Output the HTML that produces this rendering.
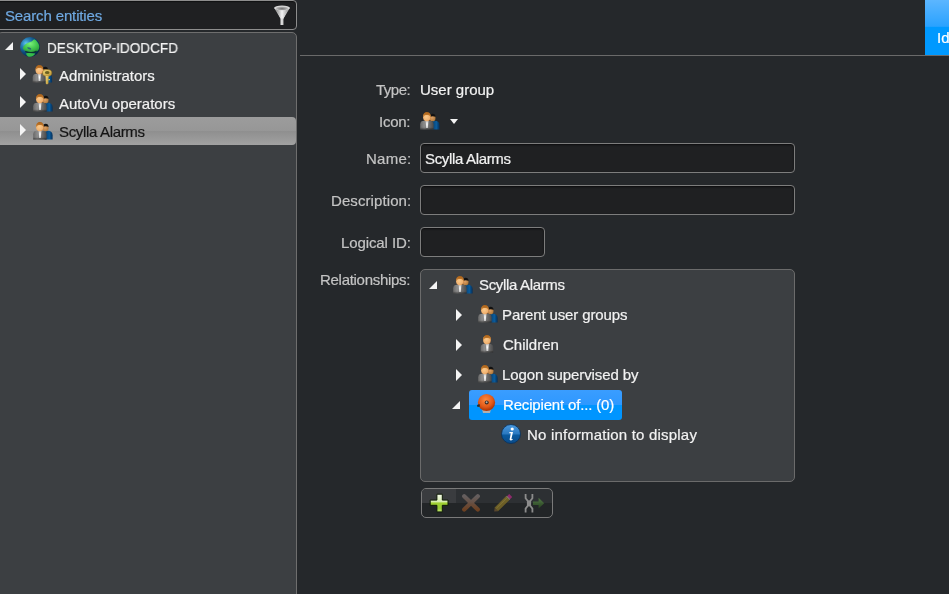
<!DOCTYPE html>
<html><head><meta charset="utf-8">
<style>
*{box-sizing:border-box;margin:0;padding:0}
html,body{width:949px;height:594px;overflow:hidden;background:#25282b;font-family:"Liberation Sans",sans-serif;}
.abs{position:absolute}
.t{position:absolute;white-space:nowrap;line-height:1;font-size:15px;will-change:transform;-webkit-text-stroke:0.2px currentColor}
#search{left:-6px;top:0;width:303px;height:30px;border:1px solid #8d8d8d;border-radius:4px;background:#1f2022;box-shadow:inset 0 1px 1px #101112}
#panel{left:-3px;top:32px;width:300px;height:600px;border:1px solid #6e6e6e;border-radius:5px;background:#3c3f42}
#sel{left:0;top:117px;width:296px;height:28px;border-radius:0 4px 4px 0;background:linear-gradient(#9c9c9c,#979797 48%,#8f8f8f 52%,#a2a2a2)}
#hline{left:300px;top:55px;width:649px;height:1px;background:#6a6a6a}
#tab{left:925px;top:0;width:24px;height:55px;background:linear-gradient(#5cb6ff,#2aa2ff 48%,#0099ff 49%,#0099ff)}
.lab{color:#c4c4c4}
.val{color:#f2f2f2}
.tb{position:absolute;border:1px solid #7d7d7d;border-radius:4px;background:#1f2022;box-shadow:inset 0 1px 2px #0c0c0d}
#rel{left:420px;top:269px;width:375px;height:213px;border:1px solid #6b6b6b;border-radius:5px;background:#3c3f42}
#sel2{left:469px;top:390px;width:153px;height:30px;border-radius:3px;background:linear-gradient(#3a9dff,#2e98ff 50%,#0095ff 51%,#0095ff)}
#toolbar{left:421px;top:488px;width:132px;height:30px;border:1px solid #7a7a7a;border-radius:5px;background:linear-gradient(#2d3033 50%,#222527 50%);overflow:hidden}
.tri-r{position:absolute;width:0;height:0;border-top:6px solid transparent;border-bottom:6px solid transparent;border-left:6px solid #f4f4f4}
.tri-d{position:absolute;width:0;height:0;border-left:8px solid transparent;border-bottom:8px solid #f4f4f4}
svg.ic{position:absolute;overflow:visible}
</style></head><body>

<svg width="0" height="0" style="position:absolute">
<defs>
<radialGradient id="face" cx="0.42" cy="0.45" r="0.6"><stop offset="0" stop-color="#fcca8a"/><stop offset="0.8" stop-color="#eeb070"/><stop offset="1" stop-color="#d08a48"/></radialGradient>
<radialGradient id="face2" cx="0.42" cy="0.45" r="0.6"><stop offset="0" stop-color="#dca068"/><stop offset="1" stop-color="#b07838"/></radialGradient>
<linearGradient id="suit" x1="0" x2="1"><stop offset="0" stop-color="#686868"/><stop offset="0.3" stop-color="#8c8c8c"/><stop offset="0.7" stop-color="#6a6a6a"/><stop offset="1" stop-color="#4a4a4a"/></linearGradient>
<linearGradient id="suitv" x1="0" y1="0" x2="0" y2="1"><stop offset="0.75" stop-color="#000" stop-opacity="0"/><stop offset="1" stop-color="#000" stop-opacity="0.45"/></linearGradient>
<linearGradient id="blue" x1="0" x2="1"><stop offset="0" stop-color="#083a68"/><stop offset="0.6" stop-color="#0a5c9c"/><stop offset="1" stop-color="#052e58"/></linearGradient>
<linearGradient id="hair" x1="0" y1="0" x2="0" y2="1"><stop offset="0" stop-color="#a86018"/><stop offset="1" stop-color="#d08838"/></linearGradient>
<radialGradient id="shirt" cx="0.5" cy="0.5" r="0.5"><stop offset="0" stop-color="#ffffff"/><stop offset="1" stop-color="#c8c8c8"/></radialGradient>
<symbol id="grp" viewBox="0 0 20 18" overflow="visible">
<path d="M11.6 17.4 L11.6 11 C11.6 9.4 13 8.8 15 8.8 C17.8 8.8 19.6 10.4 19.6 13.2 L19.6 17.4Z" fill="url(#blue)"/>
<ellipse cx="12.5" cy="5.9" rx="3" ry="3.4" fill="url(#face2)"/>
<path d="M9.6 4.8 C9.8 2.5 11.2 1.7 12.7 1.7 C14.4 1.7 15.5 2.7 15.6 4.9 C14.3 4 11.5 3.9 9.6 4.8Z" fill="#111"/>
<path d="M0.2 17.4 L0.2 12.2 C0.2 9.9 1.8 8.8 4 8.8 L9.8 8.8 C12 8.8 13.6 9.9 13.6 12.2 L13.6 17.4Z" fill="url(#suit)"/>
<path d="M0.2 17.4 L0.2 12.2 C0.2 9.9 1.8 8.8 4 8.8 L9.8 8.8 C12 8.8 13.6 9.9 13.6 12.2 L13.6 17.4Z" fill="url(#suitv)"/>
<path d="M5.5 8.8 L8.5 8.8 L7.9 16 L6.1 16Z" fill="url(#shirt)"/>
<ellipse cx="6.9" cy="5.2" rx="3.8" ry="4" fill="url(#face)"/>
<path d="M3.0 5.4 C2.8 1.8 4.8 0.1 6.9 0.1 C9.3 0.1 11 1.8 10.8 5.2 C10.1 3.7 8.6 3.1 6.9 3.1 C5.3 3.1 3.7 3.7 3.0 5.4Z" fill="url(#hair)"/>
</symbol>
<symbol id="one" viewBox="0 0 20 18" overflow="visible">
<path d="M2.7 17.4 L2.7 12.4 C2.7 10 4.3 8.8 6.7 8.8 L11.2 8.8 C13.6 8.8 15.2 10 15.2 12.4 L15.2 17.4Z" fill="url(#suit)"/>
<path d="M2.7 17.4 L2.7 12.4 C2.7 10 4.3 8.8 6.7 8.8 L11.2 8.8 C13.6 8.8 15.2 10 15.2 12.4 L15.2 17.4Z" fill="url(#suitv)"/>
<path d="M7.7 8.8 L11 8.8 L10.3 16 L8.4 16Z" fill="url(#shirt)"/>
<ellipse cx="9" cy="5" rx="3.9" ry="4.2" fill="url(#face)"/>
<path d="M5.1 5.1 C4.9 1.5 6.9 0 9 0 C11.4 0 13.1 1.5 12.9 4.9 C12.3 3.4 10.8 2.9 9 2.9 C7.3 2.9 5.8 3.5 5.1 5.1Z" fill="url(#hair)"/>
</symbol>
</defs>
</svg>
<div id="search" class="abs"></div>
<div class="t " style="left:5px;top:8px;letter-spacing:-0.14px;color:#6fa9e2">Search entities</div>
<svg class="ic" style="left:273px;top:4px" width="18" height="22" viewBox="0 0 18 22">
<defs><linearGradient id="fun" x1="0" x2="1"><stop offset="0" stop-color="#8a8a8a"/><stop offset="0.5" stop-color="#f4f4f4"/><stop offset="1" stop-color="#9a9a9a"/></linearGradient>
<radialGradient id="funin" cx="0.5" cy="0.6" r="0.6"><stop offset="0" stop-color="#707070"/><stop offset="1" stop-color="#c8c8c8"/></radialGradient></defs>
<path d="M1.2 4 C1.2 2 16.8 2 16.8 4 L10.2 15 L7.8 15Z" fill="url(#fun)"/>
<ellipse cx="9" cy="4" rx="7.8" ry="2.6" fill="#d8d8d8"/>
<ellipse cx="9" cy="4.3" rx="6" ry="1.9" fill="url(#funin)"/>
<path d="M3 5.2 C5 7 13 7 15 5.2 L10.2 15 L7.8 15Z" fill="url(#fun)"/>
<rect x="7.2" y="14.5" width="3.4" height="6.5" fill="url(#fun)"/>
</svg>
<div id="panel" class="abs"></div>
<div id="sel" class="abs"></div>
<div class="tri-d" style="left:5px;top:42px"></div>
<svg class="ic" style="left:20px;top:37px" width="20" height="20" viewBox="0 0 20 20">
<defs><radialGradient id="gl" cx="0.3" cy="0.32" r="0.72"><stop offset="0" stop-color="#60c8f0"/><stop offset="0.3" stop-color="#2a80b8"/><stop offset="0.65" stop-color="#0c4a7c"/><stop offset="1" stop-color="#062848"/></radialGradient>
<radialGradient id="land" cx="0.45" cy="0.35" r="0.7"><stop offset="0" stop-color="#7af07a"/><stop offset="0.55" stop-color="#44c850"/><stop offset="1" stop-color="#2a9a3a"/></radialGradient></defs>
<circle cx="10" cy="10" r="10" fill="url(#gl)"/>
<path d="M2.8 11.2 C3.5 8.5 6 6.6 8.1 5.8 C10 5.1 11.5 4.6 12.2 4.1 C13 3.5 13.6 2.6 14.2 2.3 C16.6 3.4 18.6 6 19.3 9 C19.6 11.5 18.6 13.5 17 14.3 C14 15.2 9 15.2 6 14.2 C4.5 13.6 3.2 12.6 2.8 11.2Z" fill="url(#land)"/>
<ellipse cx="9.2" cy="11.4" rx="2.2" ry="0.9" transform="rotate(22 9.2 11.4)" fill="#2a6878"/>
<path d="M5.2 14.3 C9 16.2 13.5 16 16.6 14" stroke="#0e2c1c" stroke-width="1.3" stroke-opacity="0.75" fill="none"/>
<path d="M6 16.4 C8 15.8 12.5 15.8 15.3 16.6 C14.6 18.5 12 19.7 10 19.8 C8 19.7 6.6 18.6 6 16.4Z" fill="#36bc4a"/>
</svg>
<div class="t val" style="left:47px;top:40px;transform:scaleX(0.905);transform-origin:0 0">DESKTOP-IDODCFD</div>
<div class="tri-r" style="left:20px;top:68px"></div>
<svg class="ic" style="left:32px;top:65px" width="22" height="22" viewBox="0 0 22 22">
<use href="#grp" x="0.5" y="0" width="20" height="18"/>
<defs><linearGradient id="key" x1="0" y1="0" x2="1" y2="1"><stop offset="0" stop-color="#f4dc80"/><stop offset="1" stop-color="#b89030"/></linearGradient></defs>
<ellipse cx="15.2" cy="7.9" rx="4.6" ry="3.4" fill="url(#key)" stroke="#8a6a18" stroke-width="0.5"/>
<ellipse cx="15.2" cy="7.6" rx="2.3" ry="1.5" fill="#6a6020"/>
<path d="M13.6 11 L16.6 11 L16.4 18.5 L15 19.6 L13.8 18.5Z" fill="url(#key)"/>
<rect x="16.4" y="14" width="1.6" height="1.2" fill="#d8b848"/>
</svg>
<div class="t val" style="left:59px;top:68px">Administrators</div>
<div class="tri-r" style="left:20px;top:96px"></div>
<svg class="ic" style="left:32.5px;top:94px" width="20" height="18"><use href="#grp" width="20" height="18"/></svg>
<div class="t val" style="left:59px;top:96px">AutoVu operators</div>
<div class="tri-r" style="left:20px;top:124px"></div>
<svg class="ic" style="left:32.5px;top:122px" width="20" height="18"><use href="#grp" width="20" height="18"/></svg>
<div class="t " style="left:59px;top:124px;letter-spacing:-0.34px;color:#141414">Scylla Alarms</div>
<div id="hline" class="abs"></div>
<div id="tab" class="abs"></div>
<div class="t " style="left:937px;top:30px;color:#fff">Id</div>
<div class="t lab" style="left:376px;top:82px;letter-spacing:-0.5px">Type:</div>
<div class="t val" style="left:420px;top:82px">User group</div>
<div class="t lab" style="left:379px;top:114px;letter-spacing:-0.25px">Icon:</div>
<svg class="ic" style="left:420px;top:112px" width="20" height="18"><use href="#grp" width="20" height="18"/></svg>
<div class="abs" style="left:450px;top:119px;width:0;height:0;border-left:4px solid transparent;border-right:4px solid transparent;border-top:5px solid #f4f4f4"></div>
<div class="t lab" style="left:366px;top:151px;letter-spacing:0.25px">Name:</div>
<div class="tb" style="left:420px;top:143px;width:375px;height:30px"></div>
<div class="t val" style="left:425px;top:151px;letter-spacing:-0.34px">Scylla Alarms</div>
<div class="t lab" style="left:331px;top:193px;letter-spacing:0.09px">Description:</div>
<div class="tb" style="left:420px;top:185px;width:375px;height:30px"></div>
<div class="t lab" style="left:341px;top:235px;letter-spacing:-0.1px">Logical ID:</div>
<div class="tb" style="left:420px;top:227px;width:125px;height:30px"></div>
<div class="t lab" style="left:320px;top:272px;letter-spacing:-0.29px">Relationships:</div>
<div id="rel" class="abs"></div>
<div class="tri-d" style="left:428.5px;top:280.5px"></div>
<svg class="ic" style="left:453px;top:275.5px" width="20" height="18"><use href="#grp" width="20" height="18"/></svg>
<div class="t val" style="left:479px;top:277px;letter-spacing:-0.34px">Scylla Alarms</div>
<div class="tri-r" style="left:456px;top:309px"></div>
<svg class="ic" style="left:477.5px;top:305px" width="20" height="18"><use href="#grp" width="20" height="18"/></svg>
<div class="t val" style="left:502px;top:307px;letter-spacing:-0.12px">Parent user groups</div>
<div class="tri-r" style="left:456px;top:339px"></div>
<svg class="ic" style="left:478px;top:335px" width="20" height="18"><use href="#one" width="20" height="18"/></svg>
<div class="t val" style="left:503px;top:337px">Children</div>
<div class="tri-r" style="left:456px;top:369px"></div>
<svg class="ic" style="left:477.5px;top:365px" width="20" height="18"><use href="#grp" width="20" height="18"/></svg>
<div class="t val" style="left:502px;top:367px;letter-spacing:-0.11px">Logon supervised by</div>
<div id="sel2" class="abs"></div>
<div class="tri-d" style="left:452px;top:401px"></div>
<svg class="ic" style="left:476px;top:393px" width="21" height="21" viewBox="0 0 21 21">
<defs><radialGradient id="bell" cx="0.45" cy="0.35" r="0.6"><stop offset="0" stop-color="#ff8a40"/><stop offset="0.7" stop-color="#e05818"/><stop offset="1" stop-color="#b03808"/></radialGradient></defs>
<path d="M6 16 L15 16 L14 20 L7 20Z" fill="#b0b0b0"/>
<circle cx="10.5" cy="9.5" r="8.6" fill="url(#bell)"/>
<circle cx="10.7" cy="9.5" r="2" fill="#3a2a22"/>
<circle cx="10.6" cy="9.3" r="1" fill="#b0b0b0"/>
<path d="M1 12 L3.5 11 L4 13.5 L1.5 14Z" fill="#2a2a2a"/>
</svg>
<div class="t " style="left:503px;top:397px;letter-spacing:-0.17px;color:#fff">Recipient of... (0)</div>
<svg class="ic" style="left:501px;top:424px" width="20" height="20" viewBox="0 0 20 20">
<defs><linearGradient id="inf" x1="0" y1="0" x2="0" y2="1"><stop offset="0" stop-color="#4a9ae0"/><stop offset="0.5" stop-color="#2a78c0"/><stop offset="0.55" stop-color="#0a5aa0"/><stop offset="1" stop-color="#0a4a88"/></linearGradient></defs>
<circle cx="10" cy="10" r="9.5" fill="url(#inf)" stroke="#0a3058" stroke-width="0.8"/>
<circle cx="11.2" cy="5" r="1.6" fill="#fff"/>
<path d="M8.5 8 L12 8 L10.5 14.5 C10.3 15.3 11 15.3 11.8 14.8 L11.6 15.8 C10.5 16.6 8.3 16.8 8.7 15 L9.8 9.3 L8.3 9.3Z" fill="#fff"/>
</svg>
<div class="t val" style="left:527px;top:427px;letter-spacing:0.2px">No information to display</div>
<div id="toolbar" class="abs"><div class="abs" style="left:0;top:0;width:34px;height:14px;background:#3a3c3f"></div></div>
<svg class="ic" style="left:429px;top:493px" width="20" height="20" viewBox="0 0 20 20">
<defs><linearGradient id="plus" x1="0" y1="0" x2="0" y2="1"><stop offset="0" stop-color="#f6fbec"/><stop offset="0.42" stop-color="#d8eeb0"/><stop offset="0.5" stop-color="#a0d030"/><stop offset="0.8" stop-color="#98cc38"/><stop offset="1" stop-color="#c8e878"/></linearGradient></defs>
<path d="M7.9 1.2 H13.3 V7.1 H19 V12.3 H13.3 V18.9 H7.9 V12.3 H1.2 V7.1 H7.9Z" fill="url(#plus)" stroke="#0e1a06" stroke-width="1"/>
</svg>
<svg class="ic" style="left:461px;top:493px;opacity:0.85" width="20" height="20" viewBox="0 0 20 20">
<defs><linearGradient id="xg" x1="0" y1="0" x2="0" y2="1"><stop offset="0" stop-color="#6e6666"/><stop offset="0.45" stop-color="#72584a"/><stop offset="1" stop-color="#7a4622"/></linearGradient></defs>
<path d="M3.2 3.2 L16.8 16.6 M16.8 3.2 L3.2 16.6" stroke="url(#xg)" stroke-width="4.2" stroke-linecap="round" fill="none"/>
<path d="M3.2 3.2 L16.8 16.6 M16.8 3.2 L3.2 16.6" stroke="#1a1210" stroke-opacity="0.35" stroke-width="5.2" stroke-linecap="round" fill="none" style="mix-blend-mode:normal" transform="translate(0,0)" visibility="hidden"/>
</svg>
<svg class="ic" style="left:493px;top:493px;opacity:0.8" width="20" height="20" viewBox="0 0 20 20">
<path d="M3.2 16.5 L15.2 4.6" stroke="#7e6c26" stroke-width="5" stroke-linecap="butt" fill="none"/>
<path d="M3.5 15.2 L14 4.8" stroke="#b0a050" stroke-width="1" fill="none" opacity="0.5"/>
<path d="M14 3.2 L16.2 1 L19.2 4 L17 6.2Z" fill="#a8287a"/>
<path d="M13.4 3.6 L16.6 6.8 L17.2 6.2 L14 3Z" fill="#9a9a9a"/>
<path d="M1.2 18.6 L1.6 15 L5 18.2Z" fill="#6a5030"/>
</svg>
<svg class="ic" style="left:524px;top:494px" width="22" height="19" viewBox="0 0 22 19">
<path d="M1.6 0 V4.2 L3.8 7 V11.8 L1.6 14.6 V18.6 M8.4 0 V4.2 L6.2 7 V11.8 L8.4 14.6 V18.6" stroke="#8c8c8c" stroke-width="1.8" fill="none"/>
<rect x="3.6" y="6.5" width="2.8" height="5.8" fill="#8c8c8c"/>
<defs><linearGradient id="arr" x1="0" y1="0" x2="0" y2="1"><stop offset="0" stop-color="#5a8a4a"/><stop offset="1" stop-color="#2a4a20"/></linearGradient></defs>
<path d="M9 7.4 H14.6 V3.8 L20.2 9.2 L14.6 14.4 V11 H9Z" fill="url(#arr)" opacity="0.8"/>
</svg>
</body></html>
